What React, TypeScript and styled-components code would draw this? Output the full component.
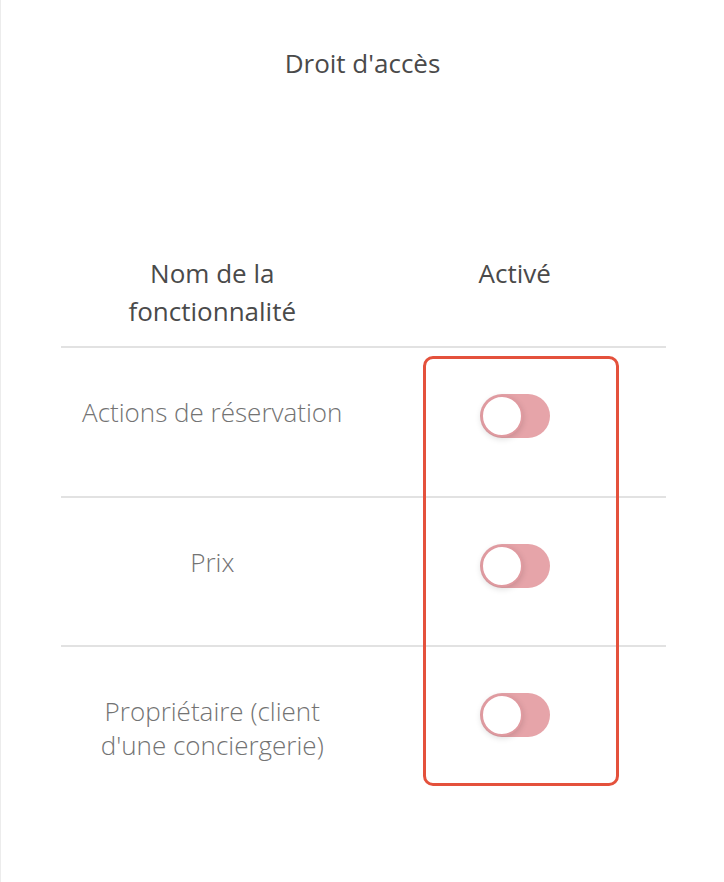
import React from "react";
import styled, { createGlobalStyle } from "styled-components";

const Global = createGlobalStyle`
  html, body { margin: 0; padding: 0; background: #ffffff; }
  body { font-family: "Open Sans", "Liberation Sans", sans-serif; }
  * { box-sizing: border-box; }
`;

const Panel = styled.div`
  position: relative;
  width: 724px;
  min-height: 882px;
  background: #ffffff;
  border-left: 1px solid #ececec;
  padding-top: 46px;
`;

const Title = styled.h2`
  margin: 0;
  font-size: 26px;
  line-height: 34px;
  font-weight: 400;
  color: #4a4a4a;
  text-align: center;
`;

const Table = styled.div`
  margin: 174px 58px 0 60px;
  display: flex;
  flex-direction: column;
`;

const HeaderRow = styled.div`
  display: grid;
  grid-template-columns: 1fr 1fr;
  padding-bottom: 16px;
`;

const HeadCell = styled.div`
  font-size: 26px;
  line-height: 38px;
  font-weight: 400;
  color: #4a4a4a;
  text-align: center;
  padding: 0 40px;
`;

const Row = styled.div`
  display: grid;
  grid-template-columns: 1fr 1fr;
  height: 149.5px;
  border-top: 2px solid #e2e2e2;
`;

const NameCell = styled.div`
  font-size: 26px;
  line-height: 34px;
  font-weight: 300;
  color: #737373;
  text-align: center;
  padding: 47px 6px 0;
  white-space: pre-line;
`;

const ToggleCell = styled.div`
  display: flex;
  justify-content: center;
  align-items: flex-start;
  padding-top: 46px;
`;

const Track = styled.div<{ $on: boolean }>`
  position: relative;
  width: 70px;
  height: 44px;
  border-radius: 22px;
  background: #e6a4a9;
`;

const Knob = styled.div<{ $on: boolean }>`
  position: absolute;
  top: 1px;
  left: ${(p) => (p.$on ? "27px" : "1px")};
  width: 42px;
  height: 42px;
  border-radius: 50%;
  background: #ffffff;
  border: 2px solid #e09aa0;
  box-shadow: 0 2px 6px rgba(0, 0, 0, 0.14);
`;

const Highlight = styled.div`
  position: absolute;
  left: 422px;
  top: 356px;
  width: 196px;
  height: 430px;
  border: 3.5px solid #e4513c;
  border-radius: 10px;
  pointer-events: none;
`;

const Toggle = ({ on }: { on: boolean }) => (
  <Track $on={on}>
    <Knob $on={on} />
  </Track>
);

const rows = [
  "Actions de réservation",
  "Prix",
  "Propriétaire (client\nd'une conciergerie)",
];

export default function App() {
  return (
    <>
      <Global />
      <Panel>
        <Title>Droit d'accès</Title>
        <Table>
          <HeaderRow>
            <HeadCell>Nom de la fonctionnalité</HeadCell>
            <HeadCell>Activé</HeadCell>
          </HeaderRow>
          {rows.map((r) => (
            <Row key={r}>
              <NameCell>{r}</NameCell>
              <ToggleCell>
                <Toggle on={false} />
              </ToggleCell>
            </Row>
          ))}
        </Table>
        <Highlight />
      </Panel>
    </>
  );
}
